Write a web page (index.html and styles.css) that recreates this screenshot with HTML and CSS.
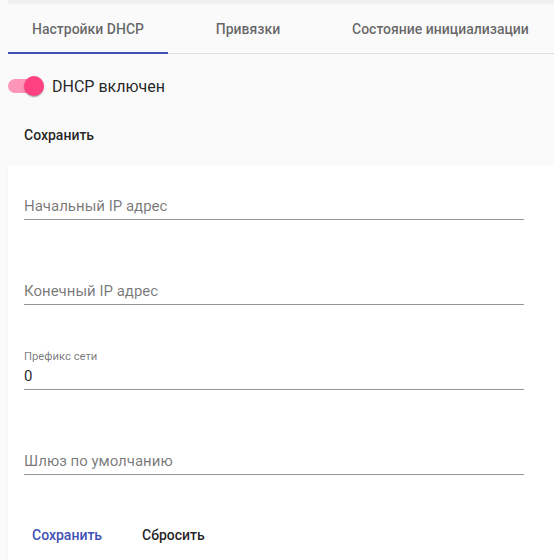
FILE: index.html
```html
<!DOCTYPE html>
<html lang="ru">
<head>
<meta charset="utf-8">
<title>DHCP</title>
<link rel="stylesheet" href="styles.css">
</head>
<body>
<div class="topbar"></div>
<nav class="tabs">
  <div class="tab active">Настройки DHCP</div>
  <div class="tab">Привязки</div>
  <div class="tab">Состояние инициализации</div>
</nav>
<div class="toggle-row">
  <span class="toggle"><span class="track"></span><span class="thumb"></span></span>
  <span class="toggle-label">DHCP включен</span>
</div>
<div class="top-actions">
  <button class="btn">Сохранить</button>
</div>
<section class="card">
  <div class="field">
    <div class="field-label"></div>
    <div class="field-input placeholder">Начальный IP адрес</div>
  </div>
  <div class="field">
    <div class="field-label"></div>
    <div class="field-input placeholder">Конечный IP адрес</div>
  </div>
  <div class="field">
    <div class="field-label">Префикс сети</div>
    <div class="field-input">0</div>
  </div>
  <div class="field">
    <div class="field-label"></div>
    <div class="field-input placeholder">Шлюз по умолчанию</div>
  </div>
  <div class="card-actions">
    <button class="btn primary">Сохранить</button>
    <button class="btn">Сбросить</button>
  </div>
</section>
</body>
</html>
```
FILE: styles.css
```css
html, body {
  margin: 0;
  padding: 0;
}
body {
  background: #fafafa;
  font-family: Roboto, "Noto Sans", sans-serif;
  color: rgba(0,0,0,0.87);
  padding: 0 0 0 8px;
  overflow: hidden;
  height: 560px;
}
.topbar {
  height: 4px;
  background: #f1f1f1;
}
.tabs {
  display: flex;
  height: 48px;
  margin-top: 1px;
  border-bottom: 1px solid #e0e0e0;
}
.tab {
  min-width: 160px;
  box-sizing: border-box;
  padding: 0 24px;
  display: flex;
  align-items: center;
  justify-content: center;
  font-size: 14px;
  font-weight: 500;
  color: rgba(0,0,0,0.6);
  position: relative;
}
.tab.active::after {
  content: "";
  position: absolute;
  left: 0;
  right: 0;
  bottom: -1px;
  height: 2px;
  background: #3f51b5;
}
.toggle-row {
  display: flex;
  align-items: center;
  height: 24px;
  margin-top: 20px;
}
.toggle {
  position: relative;
  width: 36px;
  height: 24px;
  display: inline-block;
}
.track {
  position: absolute;
  left: 0;
  top: 5px;
  width: 36px;
  height: 14px;
  border-radius: 8px;
  background: rgba(255, 64, 129, 0.54);
}
.thumb {
  position: absolute;
  left: 16px;
  top: 2px;
  width: 20px;
  height: 20px;
  border-radius: 50%;
  background: #ff4081;
  box-shadow: 0 2px 1px -1px rgba(0,0,0,.2), 0 1px 1px 0 rgba(0,0,0,.14), 0 1px 3px 0 rgba(0,0,0,.12);
}
.toggle-label {
  margin-left: 8px;
  font-size: 16px;
}
.top-actions {
  margin-top: 19px;
}
.btn {
  font-family: Roboto, "Noto Sans", sans-serif;
  font-size: 14px;
  font-weight: 500;
  color: rgba(0,0,0,0.87);
  background: transparent;
  border: 0;
  padding: 0 16px;
  height: 36px;
  line-height: 36px;
  border-radius: 4px;
  cursor: pointer;
}
.btn.primary {
  color: #3f51b5;
}
.card {
  margin-top: 12px;
  background: #fff;
  border-radius: 4px 0 0 4px;
  box-shadow: 0 2px 1px -1px rgba(0,0,0,.05), 0 1px 1px 0 rgba(0,0,0,.04), 0 1px 3px 0 rgba(0,0,0,.04);
  padding: 15px 30px 16px 16px;
  display: flex;
  flex-direction: column;
  gap: 45px;
}
.field {
  width: 500px;
  border-bottom: 1px solid #949494;
}
.field-label {
  height: 14px;
  line-height: 14px;
  font-size: 11.25px;
  color: rgba(0,0,0,0.54);
}
.field-input {
  margin-top: 2px;
  padding-bottom: 3px;
  height: 20px;
  line-height: 20px;
  font-size: 15px;
  color: rgba(0,0,0,0.87);
}
.field-input.placeholder {
  color: rgba(0,0,0,0.54);
}
.card-actions {
  margin: -3px 0 0 -8px;
  display: flex;
  gap: 8px;
}
```
